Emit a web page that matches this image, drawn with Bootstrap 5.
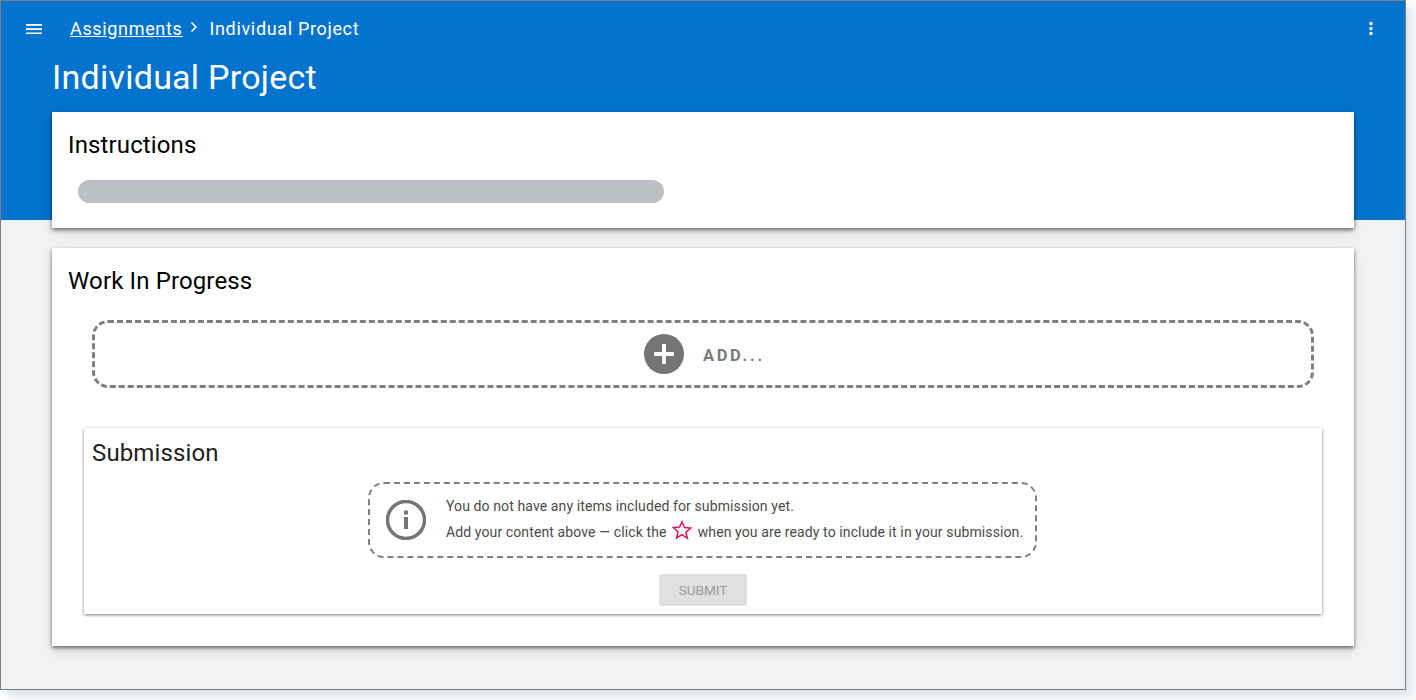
<!DOCTYPE html>
<html lang="en">
<head>
<meta charset="utf-8">
<title>Individual Project</title>
<link href="https://cdn.jsdelivr.net/npm/bootstrap@5.3.0/dist/css/bootstrap.min.css" rel="stylesheet">
<style>
html,body{height:700px;overflow:hidden;background:#fff}
body{font-family:Roboto,"Liberation Sans",sans-serif}
.app-frame{width:1406px;height:690px;border:1px solid #7c7f82;box-shadow:6px 6px 10px rgba(150,170,190,.35);background:linear-gradient(#0473ce 219px,#f1f2f4 219px);box-sizing:border-box}
.top-row{height:55px;padding:0 31px 0 23px;color:#fff}
.icon-btn{display:flex;line-height:0}
.crumbs{margin-left:26px;font-size:18px;letter-spacing:.66px;color:#fff;line-height:24px}
.crumbs a{color:#fff}
.crumbs svg{margin:0 9px 3px 6px}
.page-title{margin:0 0 0 51px;height:56px;font-size:34px;font-weight:400;line-height:42px;color:#fff;letter-spacing:.25px}
.sheet{margin:0 51px;background:#fff;border-radius:0;box-shadow:0 2px 4px rgba(0,0,0,.55),0 6px 12px rgba(0,0,0,.08)}
.sheet-a{height:116px;padding:17px 16px 16px}
.sheet-b{height:398px;margin-top:20px;padding:17px 16px 16px}
.sheet-head{font-size:24px;line-height:32px;font-weight:400;color:#000;margin:0;letter-spacing:.13px}
.redact{width:586px;height:23px;margin:19px 0 0 10px;border-radius:12px;background:#bcbfc3}
.add-box{height:68px;margin:23px 24px 0 24px;padding-left:3px;border:3px dashed #7f7f7f;border-radius:16px;gap:19px;color:#7a7a7a}
.add-label{font-size:16.500px;font-weight:700;letter-spacing:2.700px;margin-top:5px}
.inner-sheet{height:186px;margin:40px 16px 0;padding:9px 8px 8px;box-shadow:0 1px 3px rgba(0,0,0,.5);background:#fff}
.inner-head{font-size:24px;line-height:32px;font-weight:400;color:#212121;margin:0;letter-spacing:.13px}
.notice{width:669px;height:76px;margin:13px 0 0 276px;border:2px dashed #7f7f7f;border-radius:16px;padding:3px 12px 0 16px;gap:20px}
.notice>svg{margin-top:-3px}
.notice-text{font-size:14px;color:#4a4a4a;letter-spacing:.11px;line-height:20px;white-space:nowrap}
.notice-text svg{margin:0 1px 6px 1px}
.notice-line2{margin-top:3px}
.submit-btn{width:88px;height:32px;margin-top:16px;background:#e0e0e0;color:#9a9a9a;font-size:13.500px;border:0;border-radius:2px;padding:1px 0 0;--bs-btn-disabled-opacity:1;--bs-btn-disabled-bg:#e0e0e0;--bs-btn-disabled-color:#9a9a9a}
</style>
</head>
<body>
<div class="app-frame">
  <div class="top-row d-flex align-items-center">
    <span class="icon-btn"><svg width="20" height="20" viewBox="0 0 20 20"><path d="M2 5h16v1.7H2zM2 9.2h16v1.7H2zM2 13.4h16v1.7H2z" fill="#fff"/></svg></span>
    <nav class="crumbs d-flex align-items-center"><a href="#">Assignments</a><svg width="12" height="12" viewBox="0 0 12 12"><path d="M3.5 1.5 8 6l-4.5 4.500" fill="none" stroke="#fff" stroke-width="1.500"/></svg><span>Individual Project</span></nav>
    <span class="icon-btn ms-auto"><svg width="6" height="16" viewBox="0 0 6 16"><circle cx="3" cy="2.500" r="1.700" fill="#fff"/><circle cx="3" cy="7.500" r="1.700" fill="#fff"/><circle cx="3" cy="12.500" r="1.700" fill="#fff"/></svg></span>
  </div>
  <h1 class="page-title">Individual Project</h1>
  <section class="sheet sheet-a">
    <h2 class="sheet-head">Instructions</h2>
    <div class="redact"></div>
  </section>
  <section class="sheet sheet-b">
    <h2 class="sheet-head">Work In Progress</h2>
    <div class="add-box d-flex align-items-center justify-content-center">
      <svg width="40" height="40" viewBox="0 0 40 40"><circle cx="20" cy="20" r="20" fill="#757575"/><path d="M18 10h4v8h8v4h-8v8h-4v-8h-8v-4h8z" fill="#fff"/></svg>
      <span class="add-label">ADD...</span>
    </div>
    <div class="inner-sheet">
      <h3 class="inner-head">Submission</h3>
      <div class="notice d-flex align-items-center">
        <svg width="40" height="40" viewBox="0 0 40 40" class="flex-shrink-0"><circle cx="20" cy="20" r="18.500" fill="none" stroke="#757575" stroke-width="3.500"/><rect x="18" y="17" width="4" height="12" fill="#757575"/><rect x="18" y="10.500" width="4" height="4" fill="#757575"/></svg>
        <div class="notice-text">
          <div>You do not have any items included for submission yet.</div>
          <div class="notice-line2">Add your content above — click the <svg width="22" height="22" viewBox="0 0 24 24"><path d="M12 3l2.700 6.300 6.800.6-5.200 4.500 1.600 6.700L12 17l-5.900 3.600 1.600-6.700-5.200-4.500 6.800-.6z" fill="none" stroke="#e0105f" stroke-width="1.600"/></svg> when you are ready to include it in your submission.</div>
        </div>
      </div>
      <div class="text-center"><button class="btn submit-btn" disabled>SUBMIT</button></div>
    </div>
  </section>
</div>
<script src="https://cdn.jsdelivr.net/npm/bootstrap@5.3.0/dist/js/bootstrap.bundle.min.js"></script>
</body>
</html>
